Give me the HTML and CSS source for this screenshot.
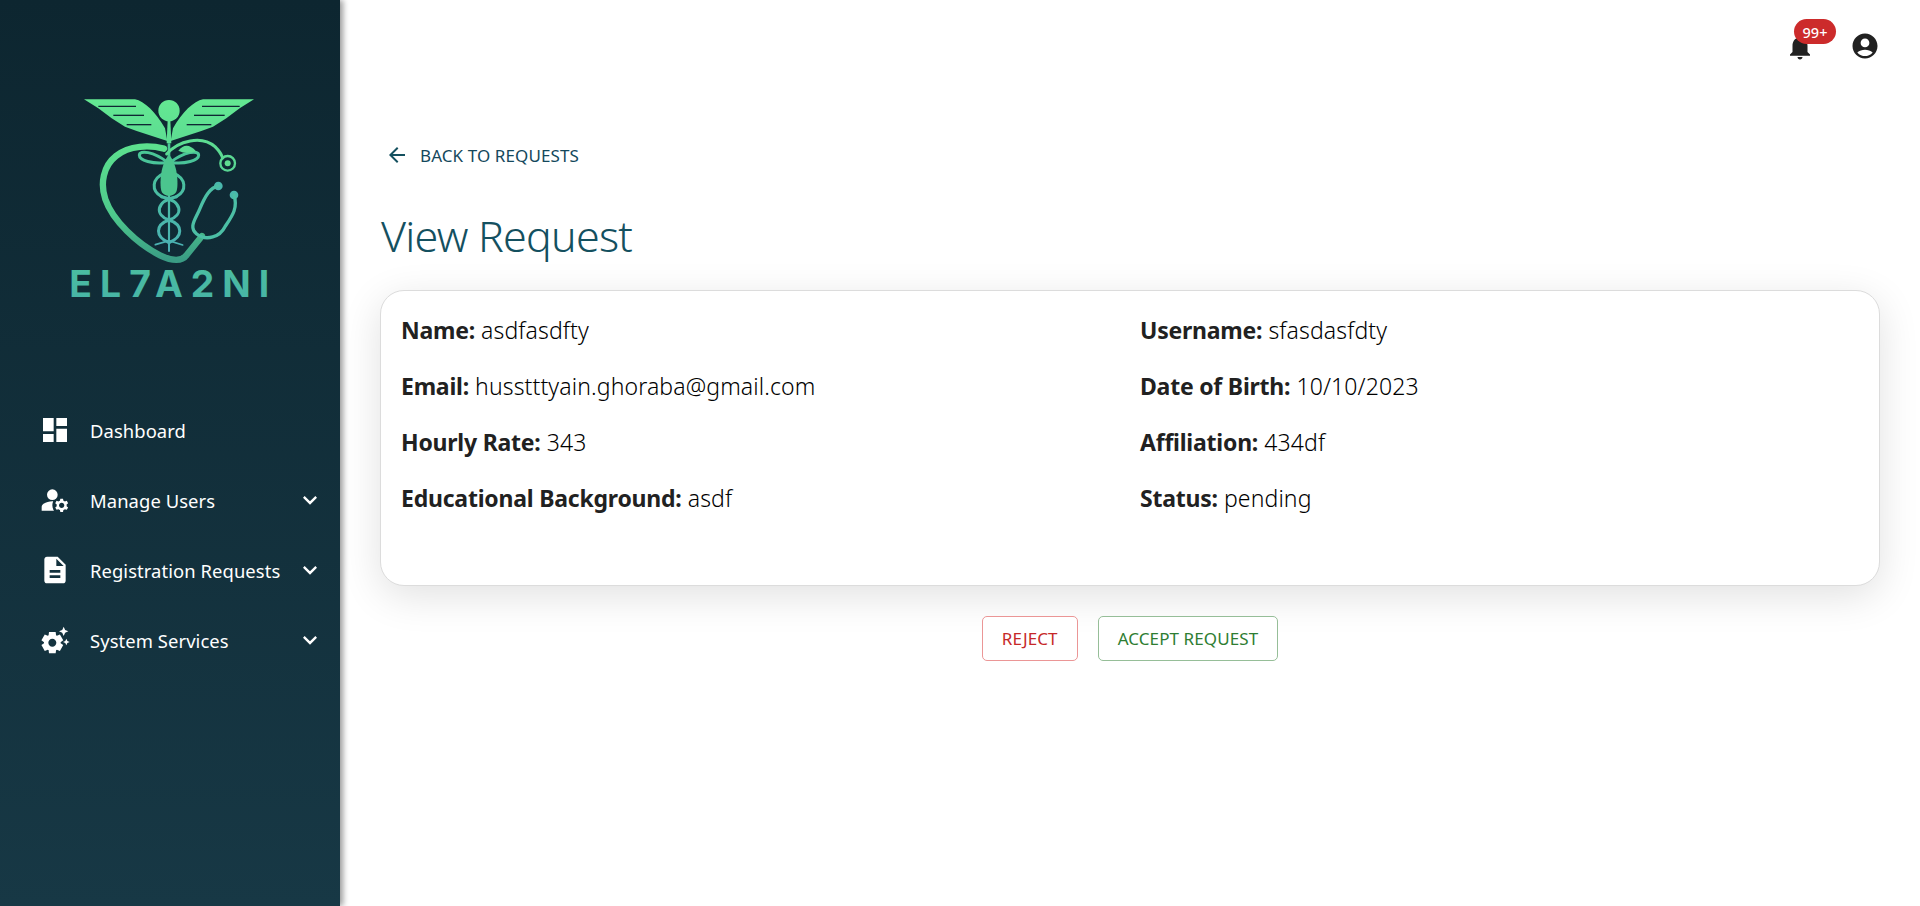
FILE: index.html
```html
<!DOCTYPE html>
<html lang="en">
<head>
<meta charset="utf-8">
<title>View Request</title>
<link rel="stylesheet" href="styles.css">
</head>
<body>
<div class="app">
  <aside class="sidebar">
    <div class="logo">
      <svg class="logo-svg" viewBox="0 0 720 690" width="240" height="230" aria-label="EL7A2NI logo">
        <defs>
          <linearGradient id="lg" gradientUnits="userSpaceOnUse" x1="0" y1="50" x2="0" y2="660">
            <stop offset="0" stop-color="#64e992"/>
            <stop offset=".45" stop-color="#55d092"/>
            <stop offset="1" stop-color="#47b5a6"/>
          </linearGradient>
          <linearGradient id="hg" gradientUnits="userSpaceOnUse" x1="0" y1="200" x2="0" y2="540">
            <stop offset="0" stop-color="#5ce08e"/>
            <stop offset=".6" stop-color="#4ec98c"/>
            <stop offset="1" stop-color="#3a9c84"/>
          </linearGradient>
          <linearGradient id="sn" gradientUnits="userSpaceOnUse" x1="0" y1="210" x2="0" y2="510">
            <stop offset="0" stop-color="#4ac796"/>
            <stop offset="1" stop-color="#4ab0b3"/>
          </linearGradient>
          <g id="wing">
            <path d="M102 58H255C282 62 318 98 345 145L352 183L260 153L225 140L185 115L145 85Z" fill="url(#lg)"/>
            <g fill="none" stroke="#0f2833" stroke-width="4">
              <path d="M145 79H258"/>
              <path d="M190 106H282"/>
              <path d="M230 134H304"/>
            </g>
          </g>
        </defs>
        <use href="#wing"/>
        <use href="#wing" transform="translate(714 0) scale(-1 1)"/>
        <g fill="none" stroke-linecap="round">
          <g stroke="url(#sn)" stroke-width="9">
            <path d="M345 248C310 252 268 242 268 226C268 208 312 216 350 245"/>
            <path d="M369 248C404 252 446 242 446 226C446 208 402 216 364 245"/>
            <path d="M342 280C306 295 302 332 335 350"/>
            <path d="M372 280C408 295 412 332 379 350"/>
            <path d="M335 350C400 365 400 405 357 420C315 435 315 470 357 488"/>
            <path d="M379 350C315 365 315 405 357 420C400 435 400 470 357 488"/>
            <path d="M316 494L357 482L398 495" stroke-width="5"/>
          </g>
        </g>
        <g fill="url(#lg)">
          <circle cx="357" cy="92" r="32"/>
          <path d="M353 120H361L364 190H350Z"/>
          <path d="M353 190H361L360 515H354Z" fill="url(#sn)"/>
          <path d="M357 224C382 250 386 310 380 332C374 352 340 352 334 332C328 310 332 250 357 224Z" fill="#4bc58e"/>
          <path d="M385 212Q410 182 438 214Q410 224 385 212Z"/>
          <circle cx="505" cy="318" r="13" fill="#4ab8ad"/>
          <circle cx="552" cy="345" r="13" fill="#4ab8ad"/>
        </g>
        <g fill="none" stroke-linecap="round">
          <path d="M342 206C300 195 238 195 198 228C160 258 150 310 166 358C188 422 262 492 330 526C370 545 395 545 410 525L456 468" stroke="url(#hg)" stroke-width="19"/>
          <path d="M350 222C385 182 455 165 495 200C507 212 514 222 518 234" stroke="url(#lg)" stroke-width="9"/>
          <circle cx="533" cy="250" r="22" stroke="url(#lg)" stroke-width="7"/>
          <circle cx="533" cy="250" r="9" fill="#5fdc90"/>
          <path d="M505 318C480 322 465 350 450 385C436 420 415 440 440 462C470 485 510 470 525 440C545 410 565 385 552 345" stroke="#4cbfa5" stroke-width="10"/>
        </g>
        <text class="logo-text" x="58" y="650" fill="url(#lg)" textLength="600">EL7A2NI</text>
      </svg>
    </div>
    <nav class="nav">
      <a class="nav-item">
        <svg class="nav-icon" viewBox="0 0 24 24"><path d="M3 13h8V3H3v10zm0 8h8v-6H3v6zm10 0h8V11h-8v10zm0-18v6h8V3h-8z"/></svg>
        <span class="nav-label">Dashboard</span>
      </a>
      <a class="nav-item">
        <svg class="nav-icon" viewBox="0 0 24 24"><circle cx="10" cy="8" r="4"/><path d="M10.67 13.02c-.22-.01-.44-.02-.67-.02-2.42 0-4.68.67-6.61 1.82-.88.52-1.39 1.5-1.39 2.53V20h9.26c-.79-1.13-1.26-2.51-1.26-4 0-1.07.25-2.07.67-2.98zM20.75 16c0-.22-.03-.42-.06-.63l1.14-1.01-1-1.73-1.45.49c-.32-.27-.68-.48-1.08-.63L18 11h-2l-.3 1.49c-.4.15-.76.36-1.08.63l-1.45-.49-1 1.73 1.14 1.01c-.03.21-.06.41-.06.63s.03.42.06.63l-1.14 1.01 1 1.73 1.45-.49c.32.27.68.48 1.08.63L16 21h2l.3-1.49c.4-.15.76-.36 1.08-.63l1.45.49 1-1.73-1.14-1.01c.03-.21.06-.41.06-.63zM17 18c-1.1 0-2-.9-2-2s.9-2 2-2 2 .9 2 2-.9 2-2 2z"/></svg>
        <span class="nav-label">Manage Users</span>
        <svg class="nav-chevron" viewBox="0 0 24 24"><path d="M16.59 8.59 12 13.17 7.41 8.59 6 10l6 6 6-6z"/></svg>
      </a>
      <a class="nav-item">
        <svg class="nav-icon" viewBox="0 0 24 24"><path d="M14 2H6c-1.1 0-1.99.9-1.99 2L4 20c0 1.1.89 2 1.99 2H18c1.1 0 2-.9 2-2V8l-6-6zm2 16H8v-2h8v2zm0-4H8v-2h8v2zm-3-5V3.5L18.5 9H13z"/></svg>
        <span class="nav-label">Registration Requests</span>
        <svg class="nav-chevron" viewBox="0 0 24 24"><path d="M16.59 8.59 12 13.17 7.41 8.59 6 10l6 6 6-6z"/></svg>
      </a>
      <a class="nav-item">
        <svg class="nav-icon" viewBox="0 0 24 24"><path d="M17.41 6.59 15 5.5l2.41-1.09L18.5 2l1.09 2.41L22 5.5l-2.41 1.09L18.5 9l-1.09-2.41zm3.87 6.13L20.5 11l-.78 1.72-1.72.78 1.72.78.78 1.72.78-1.72L23 13.5l-1.72-.78zm-5.04 1.65 1.94 1.47-2.5 4.33-2.24-.94c-.2.13-.42.26-.64.37l-.3 2.4h-5l-.3-2.41c-.22-.11-.43-.23-.64-.37l-2.24.94-2.5-4.33 1.94-1.47c-.01-.11-.01-.24-.01-.37s0-.26.01-.38l-1.94-1.47 2.5-4.33 2.24.94c.2-.13.42-.26.64-.37L7.5 6h5l.3 2.41c.22.11.43.23.64.37l2.24-.94 2.5 4.33-1.94 1.47c.01.12.01.24.01.37s0 .25-.01.36zM13 14c0-1.66-1.34-3-3-3s-3 1.34-3 3 1.34 3 3 3 3-1.34 3-3z"/></svg>
        <span class="nav-label">System Services</span>
        <svg class="nav-chevron" viewBox="0 0 24 24"><path d="M16.59 8.59 12 13.17 7.41 8.59 6 10l6 6 6-6z"/></svg>
      </a>
    </nav>
  </aside>

  <main class="main">
    <header class="topbar">
      <div class="bell">
        <svg class="top-icon" viewBox="0 0 24 24"><path d="M12 22c1.1 0 2-.9 2-2h-4c0 1.1.89 2 2 2zm6-6v-5c0-3.07-1.64-5.64-4.5-6.32V4c0-.83-.67-1.5-1.5-1.5s-1.5.67-1.5 1.5v.68C7.63 5.36 6 7.92 6 11v5l-2 2v1h16v-1l-2-2z"/></svg>
        <span class="badge">99+</span>
      </div>
      <svg class="top-icon" viewBox="0 0 24 24"><path d="M12 2C6.48 2 2 6.48 2 12s4.48 10 10 10 10-4.48 10-10S17.52 2 12 2zm0 4c1.93 0 3.5 1.57 3.5 3.5S13.93 13 12 13s-3.5-1.57-3.5-3.5S10.07 6 12 6zm0 14c-2.03 0-4.43-.82-6.14-2.88C7.55 15.8 9.68 15 12 15s4.45.8 6.14 2.12C16.43 19.18 14.03 20 12 20z"/></svg>
    </header>

    <a class="back">
      <svg class="back-icon" viewBox="0 0 24 24"><path d="M20 11H7.83l5.59-5.59L12 4l-8 8 8 8 1.41-1.41L7.83 13H20v-2z"/></svg>
      <span class="back-label">BACK TO REQUESTS</span>
    </a>

    <h1 class="title">View Request</h1>

    <section class="card">
      <p class="field"><b>Name:</b> asdfasdfty</p>
      <p class="field"><b>Username:</b> sfasdasfdty</p>
      <p class="field"><b>Email:</b> husstttyain.ghoraba@gmail.com</p>
      <p class="field"><b>Date of Birth:</b> 10/10/2023</p>
      <p class="field"><b>Hourly Rate:</b> 343</p>
      <p class="field"><b>Affiliation:</b> 434df</p>
      <p class="field"><b>Educational Background:</b> asdf</p>
      <p class="field"><b>Status:</b> pending</p>
    </section>

    <div class="actions">
      <button class="btn btn-reject">REJECT</button>
      <button class="btn btn-accept">ACCEPT REQUEST</button>
    </div>
  </main>
</div>
</body>
</html>
```

FILE: styles.css
```css
* { box-sizing: border-box; }
html, body { margin: 0; height: 100%; overflow: hidden; background: #fff; }
body { font-family: "Noto Sans", "Open Sans", sans-serif; color: #212121; }

.app { display: flex; height: 906px; }

.sidebar {
  width: 340px;
  flex: none;
  background: linear-gradient(180deg, #0d2630 0%, #173845 100%);
  box-shadow: 3px 0 6px rgba(0, 0, 0, .4);
  position: relative;
  z-index: 1;
  display: flex;
  flex-direction: column;
}
.logo { padding: 80px 0 0 50px; height: 406px; }
.logo-svg { display: block; }
.logo-text { font-family: "Inter", sans-serif; font-weight: 700; font-size: 112px; }

.nav { display: flex; flex-direction: column; gap: 22px; }
.nav-item { display: flex; align-items: center; height: 48px; padding-left: 39px; color: #fff; }
.nav-icon { width: 32px; height: 32px; fill: #fff; flex: none; }
.nav-label { margin-left: 19px; font-size: 18.4px; letter-spacing: .08px; flex: 1; white-space: nowrap; }
.nav-chevron { width: 28px; height: 28px; fill: #fff; flex: none; margin-right: 16px; }

.main { flex: 1; min-width: 0; padding: 0 40px; display: flex; flex-direction: column; }

.topbar { display: flex; justify-content: flex-end; align-items: center; gap: 35px; height: 92px; }
.bell { position: relative; display: flex; margin-top: 2px; }
.top-icon { width: 30px; height: 30px; fill: #212121; display: block; }
.badge {
  position: absolute;
  left: 9px;
  top: -13px;
  height: 25px;
  min-width: 42px;
  border-radius: 13px;
  background: #cc2b2b;
  color: #fff;
  font-size: 14.5px;
  font-weight: 500;
  display: flex;
  align-items: center;
  justify-content: center;
}

.back { display: flex; align-items: center; height: 40px; margin-top: 43px; padding-left: 5px; color: #14485c; }
.back-icon { width: 24px; height: 24px; fill: #14505f; flex: none; }
.back-label { margin-left: 11px; font-size: 17px; letter-spacing: .1px; }

.title { margin: 34px 0 0 1px; font-size: 43px; line-height: 54px; font-weight: 300; color: #14505f; letter-spacing: -.75px; }

.card {
  margin-top: 27px;
  height: 296px;
  padding: 19px 20px;
  border: 1px solid #dcdcdc;
  border-radius: 24px;
  background: #fff;
  box-shadow: 0 10px 40px rgba(0, 0, 0, .12);
  display: grid;
  grid-template-columns: 1fr 1fr;
  column-gap: 20px;
  grid-auto-rows: 56px;
}
.field { margin: 0; font-size: 23px; line-height: 40px; font-weight: 300; letter-spacing: .12px; white-space: nowrap; color: #000; }
.field b { font-weight: 700; letter-spacing: -.22px; color: #212121; }

.actions { display: flex; justify-content: center; gap: 20px; margin-top: 30px; }
.btn {
  height: 45px;
  padding: 0 19px;
  background: #fff;
  border-radius: 5px;
  font: 400 17px "Noto Sans", sans-serif;
  letter-spacing: .1px;
}
.btn-reject { color: #c62828; border: 1px solid #eb9696; }
.btn-accept { color: #2e7d32; border: 1px solid #96be98; }
```
